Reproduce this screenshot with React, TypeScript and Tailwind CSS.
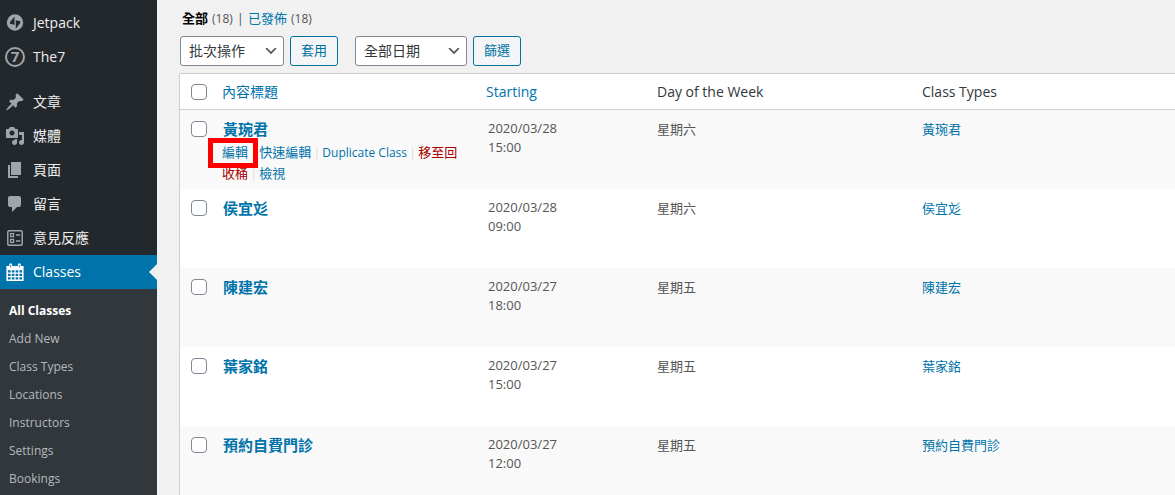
import type { ReactNode } from 'react';

type MenuItem = { label: string; icon: ReactNode };

type ClassRow = {
  title: string;
  date: string;
  time: string;
  day: string;
};

function Icon({ children }: { children: ReactNode }) {
  return (
    <svg viewBox="0 0 20 20" className="h-5 w-5 shrink-0" fill="currentColor" aria-hidden="true">
      {children}
    </svg>
  );
}

const topMenu: MenuItem[] = [
  {
    label: 'Jetpack',
    icon: (
      <Icon>
        <path
          fillRule="evenodd"
          d="M10 1.3a8.2 8.2 0 1 0 0 16.4 8.2 8.2 0 0 0 0-16.4zM9.5 11.8L5.9 11c-1-.3-1.3-1.2-.8-2l4.4-5.6v8.4zm1.3 3.9V7.2l3.6.8c1 .3 1.3 1.2.8 2l-4.4 5.7z"
        />
      </Icon>
    ),
  },
  {
    label: 'The7',
    icon: (
      <Icon>
        <circle cx="10" cy="10" r="9" fill="none" stroke="currentColor" strokeWidth="2" />
        <text x="10" y="15.4" textAnchor="middle" fontSize="15" fontWeight="700">
          7
        </text>
      </Icon>
    ),
  },
];

const contentMenu: MenuItem[] = [
  {
    label: '文章',
    icon: (
      <Icon>
        <path d="M10.44 3.02l1.82-1.82 6.36 6.35-1.83 1.82c-1.05-.68-2.48-.57-3.41.36l-.75.75c-.92.93-1.04 2.35-.35 3.41l-1.83 1.82-2.41-2.41-2.8 2.79c-.42.42-3.38 2.71-3.8 2.29s1.86-3.39 2.28-3.81l2.79-2.79L4.1 9.36l1.83-1.82c1.05.69 2.48.57 3.4-.36l.75-.75c.93-.92 1.05-2.35.36-3.41z" />
      </Icon>
    ),
  },
  {
    label: '媒體',
    icon: (
      <Icon>
        <path d="M13 11V4c0-.55-.45-1-1-1h-1.67L9 1H5L3.67 3H2c-.55 0-1 .45-1 1v7c0 .55.45 1 1 1h10c.55 0 1-.45 1-1zM7 4.5c1.38 0 2.5 1.12 2.5 2.5S8.38 9.5 7 9.5 4.5 8.38 4.5 7 5.62 4.5 7 4.5zM14 6h5v10.5c0 1.38-1.12 2.5-2.5 2.5S14 17.88 14 16.5s1.12-2.5 2.5-2.5c.17 0 .34.02.5.05V9h-3V6zm-4 8.05V13h2v3.5c0 1.38-1.12 2.5-2.5 2.5S7 17.88 7 16.5 8.12 14 9.5 14c.17 0 .34.02.5.05z" />
      </Icon>
    ),
  },
  {
    label: '頁面',
    icon: (
      <Icon>
        <path d="M6 15V2h10v13H6zm-1 1h8v2H3V5h2v11z" />
      </Icon>
    ),
  },
  {
    label: '留言',
    icon: (
      <Icon>
        <path d="M5 2h9c1.1 0 2 .9 2 2v7c0 1.1-.9 2-2 2h-2l-5 5v-5H5c-1.1 0-2-.9-2-2V4c0-1.1.9-2 2-2z" />
      </Icon>
    ),
  },
  {
    label: '意見反應',
    icon: (
      <Icon>
        <g fill="none" stroke="currentColor" strokeWidth="1.5">
          <rect x="2.8" y="2.8" width="14.4" height="14.4" rx="1.2" />
          <rect x="5.6" y="5.6" width="3" height="3" strokeWidth="1.3" />
          <rect x="5.6" y="11.4" width="3" height="3" strokeWidth="1.3" />
          <path d="M11 7.1h4.2M11 12.9h4.2" />
        </g>
      </Icon>
    ),
  },
];

const subMenu = ['All Classes', 'Add New', 'Class Types', 'Locations', 'Instructors', 'Settings', 'Bookings'];

const rows: ClassRow[] = [
  { title: '黃琬君', date: '2020/03/28', time: '15:00', day: '星期六' },
  { title: '侯宜彣', date: '2020/03/28', time: '09:00', day: '星期六' },
  { title: '陳建宏', date: '2020/03/27', time: '18:00', day: '星期五' },
  { title: '葉家銘', date: '2020/03/27', time: '15:00', day: '星期五' },
  { title: '預約自費門診', date: '2020/03/27', time: '12:00', day: '星期五' },
];

function MenuLink({ item }: { item: MenuItem }) {
  return (
    <li>
      <a href="#" className="flex h-[34px] items-center gap-2 pl-[5px] text-sm text-[#eeeeee]">
        <span className="text-[#a0a5aa]">{item.icon}</span>
        {item.label}
      </a>
    </li>
  );
}

function Sidebar() {
  return (
    <nav className="w-[157px] shrink-0 bg-[#23282d] pt-[6px]">
      <ul>
        {topMenu.map((item) => (
          <MenuLink key={item.label} item={item} />
        ))}
      </ul>
      <ul className="mt-[11px]">
        {contentMenu.map((item) => (
          <MenuLink key={item.label} item={item} />
        ))}
        <li>
          <a href="#" className="relative flex h-[34px] items-center gap-2 bg-[#0073aa] pl-[5px] text-sm text-white">
            <Icon>
              <path
                fillRule="evenodd"
                d="M1.4 4h2.8V2.8a1.5 1.5 0 0 1 3 0V4h5.6V2.8a1.5 1.5 0 0 1 3 0V4h2.8v15H1.4V4zM3 8.2v2.2h2.6V8.2H3zm3.8 0v2.2h2.6V8.2H6.8zm3.8 0v2.2h2.6V8.2h-2.6zm3.8 0v2.2H17V8.2h-2.6zM3 11.7v2.2h2.6v-2.2H3zm3.8 0v2.2h2.6v-2.2H6.8zm3.8 0v2.2h2.6v-2.2h-2.6zm3.8 0v2.2H17v-2.2h-2.6zM3 15.2v2.2h2.6v-2.2H3zm3.8 0v2.2h2.6v-2.2H6.8zm3.8 0v2.2h2.6v-2.2h-2.6zm3.8 0v2.2H17v-2.2h-2.6zM5.3 3v2.4h.8V3h-.8zm8.6 0v2.4h.8V3h-.8z"
              />
            </Icon>
            Classes
            <span className="absolute top-[9px] right-0 border-y-8 border-r-8 border-y-transparent border-r-[#f1f1f1]" />
          </a>
          <ul className="bg-[#32373c] pt-2 pb-[6px] text-xs">
            {subMenu.map((label, i) => (
              <li key={label}>
                <a
                  href="#"
                  className={
                    i === 0
                      ? 'flex h-7 items-center pl-[9px] font-bold text-white'
                      : 'flex h-7 items-center pl-[9px] text-[#b4b9be]'
                  }
                >
                  {label}
                </a>
              </li>
            ))}
          </ul>
        </li>
      </ul>
    </nav>
  );
}

function FilterSelect({ label, option, className }: { label: string; option: string; className: string }) {
  return (
    <div className={`relative ${className}`}>
      <select
        aria-label={label}
        className="h-[30px] w-full appearance-none rounded-[3px] border border-[#7e8993] bg-white pr-6 pl-2 text-sm text-[#32373c]"
      >
        <option>{option}</option>
      </select>
      <svg
        viewBox="0 0 20 20"
        className="pointer-events-none absolute top-[7px] right-[5px] h-4 w-4"
        fill="#555555"
        aria-hidden="true"
      >
        <path d="M5 6l5 5 5-5 2 1-7 7-7-7 2-1z" />
      </svg>
    </div>
  );
}

function FilterButton({ children }: { children: ReactNode }) {
  return (
    <button
      type="button"
      className="h-[30px] w-12 rounded-[3px] border border-[#0071a1] bg-[#f3f5f6] text-[13px] text-[#0071a1]"
    >
      {children}
    </button>
  );
}

function Checkbox({ label }: { label: string }) {
  return (
    <input
      type="checkbox"
      aria-label={label}
      className="block h-4 w-4 appearance-none rounded-sm border border-[#7e8993] bg-white"
    />
  );
}

function Separator() {
  return <span className="mx-[2px] text-[#dddddd]">|</span>;
}

function RowActions() {
  return (
    <div className="text-[13px] leading-5 text-[#0073aa]">
      <span className="relative">
        <a href="#">編輯</a>
        <span className="absolute -top-[5px] -right-[10px] -left-[14px] h-[30px] border-[5px] border-[#ff0000]" />
      </span>
      <Separator />
      <a href="#">快速編輯</a>
      <Separator />
      <a href="#" className="text-xs leading-5">Duplicate Class</a>
      <Separator />
      <a href="#" className="text-[#aa0000]">移至回收桶</a>
      <Separator />
      <a href="#">檢視</a>
    </div>
  );
}

export default function App() {
  return (
    <div className="flex h-screen overflow-hidden bg-[#f1f1f1] font-['Open_Sans','Noto_Sans_CJK_TC',sans-serif] text-[13px] text-[#555555]">
      <Sidebar />
      <main className="min-w-0 flex-1 pt-[9px] pl-[22px]">
        <div className="flex h-5 items-center gap-1 pl-[3px]">
          <a href="#" className="font-bold text-black">全部</a>
          <span className="text-xs">(18)</span>
          <span>|</span>
          <a href="#" className="text-[#0073aa]">已發佈</a>
          <span className="text-xs">(18)</span>
        </div>

        <div className="mt-[7px] flex gap-[6px] pl-px">
          <FilterSelect label="批次操作" option="批次操作" className="w-[104px]" />
          <FilterButton>套用</FilterButton>
          <FilterSelect label="全部日期" option="全部日期" className="ml-[11px] w-[112px]" />
          <FilterButton>篩選</FilterButton>
        </div>

        <div className="mt-[7px] border-t border-l border-[#ccd0d4] bg-white">
          <table className="w-full table-fixed border-separate border-spacing-0 text-left">
            <colgroup>
              <col className="w-8" />
              <col className="w-[264px]" />
              <col className="w-[171px]" />
              <col className="w-[265px]" />
              <col />
            </colgroup>
            <thead>
              <tr className="h-9 text-sm text-[#32373c]">
                <th className="border-b border-[#ccd0d4] pl-[11px]"><Checkbox label="全選" /></th>
                <th className="border-b border-[#ccd0d4] px-[10px] font-normal">
                  <a href="#" className="text-[#0073aa]">內容標題</a>
                </th>
                <th className="border-b border-[#ccd0d4] px-[10px] font-normal">
                  <a href="#" className="text-[#0073aa]">Starting</a>
                </th>
                <th className="border-b border-[#ccd0d4] px-[10px] font-normal">Day of the Week</th>
                <th className="border-b border-[#ccd0d4] px-[10px] font-normal">Class Types</th>
              </tr>
            </thead>
            <tbody>
              {rows.map((row, i) => (
                <tr key={row.title} className="h-[79px] align-top odd:bg-[#f9f9f9]">
                  <td className="pt-[11px] pl-[11px]"><Checkbox label={row.title} /></td>
                  <td className="px-[10px] pt-[9px]">
                    <a href="#" className="block pl-px text-[15px] leading-5 font-bold text-[#0073aa]">{row.title}</a>
                    {i === 0 && <div className="pt-[3px]"><RowActions /></div>}
                  </td>
                  <td className="px-3 pt-[9px] leading-[19px]">
                    {row.date}
                    <br />
                    {row.time}
                  </td>
                  <td className="px-[10px] pt-[9px] leading-5">{row.day}</td>
                  <td className="px-[10px] pt-[9px] leading-5"><a href="#" className="text-[#0073aa]">{row.title}</a></td>
                </tr>
              ))}
            </tbody>
          </table>
        </div>
      </main>
    </div>
  );
}
